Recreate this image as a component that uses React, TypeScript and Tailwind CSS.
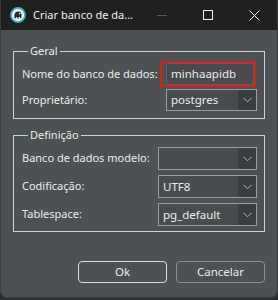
import React from "react";

const font = { fontFamily: '"Noto Sans", "Open Sans", sans-serif' };

function Chevron() {
  return (
    <svg width="9" height="6" viewBox="0 0 9 6" fill="none">
      <path d="M0.5 0.8 L4.5 4.8 L8.5 0.8" stroke="#b8bbbd" strokeWidth="1" />
    </svg>
  );
}

function Select({ value, width }: { value: string; width: string }) {
  return (
    <div className={`flex h-full ${width} border border-[#9a9d9f] bg-[#484c4e]`}>
      <div className="flex flex-1 items-center whitespace-nowrap pl-[4px] text-[11.5px] text-[#ececec]">{value}</div>
      <div className="flex w-[18px] items-center justify-center bg-[#3b3e40]">
        <Chevron />
      </div>
    </div>
  );
}

function Row({ label, children, h }: { label: string; children: React.ReactNode; h: string }) {
  return (
    <div className={`flex ${h} items-center justify-between`}>
      <span className="shrink-0 whitespace-nowrap text-[11px] text-[#ececec]">{label}</span>
      {children}
    </div>
  );
}

export default function App() {
  return (
    <div className="h-[300px] w-[278px] bg-[#2c2e2f]" style={font}>
      <div className="flex h-[298px] w-[278px] flex-col overflow-hidden rounded-b-[7px] border-x border-b border-[#3a3c3d] bg-[#4c5153]">
        <div className="flex h-[30px] shrink-0 items-center bg-[#202020]">
          <svg className="ml-[9px] shrink-0" width="16" height="16" viewBox="0 0 16 16">
            <circle cx="8" cy="8" r="7" fill="#f4f6f6" stroke="#3fb6c2" strokeWidth="1.8" />
            <path d="M4.5 11 C4 8 4.6 5 7.6 4.6 C10.2 4.3 11.9 5.8 11.6 8.2 L11.3 11.2 L10.1 11.2 L10 9.8 L8.7 9.9 L8.6 11.4 L7.3 11.4 L7.2 10.1 C6.3 10 5.8 10.6 5.8 11.6 Z" fill="#2a2a2a" />
            <circle cx="9.7" cy="6.6" r="0.8" fill="#f4f6f6" />
          </svg>
          <span className="ml-[7px] whitespace-nowrap text-[11px] text-[#f0f0f0]">Criar banco de da...</span>
          <div className="ml-auto flex shrink-0 items-center">
            <div className="flex w-[46px] justify-center">
              <div className="h-px w-[10px] bg-[#5a5a5a]" />
            </div>
            <div className="flex w-[46px] justify-center">
              <div className="h-[10px] w-[10px] border border-[#f0f0f0]" />
            </div>
            <div className="flex w-[46px] justify-center">
              <svg width="11" height="11" viewBox="0 0 11 11">
                <path d="M0.5 0.5 L10.5 10.5 M10.5 0.5 L0.5 10.5" stroke="#f0f0f0" strokeWidth="1" />
              </svg>
            </div>
          </div>
        </div>

        <div className="flex flex-col px-[12px]">
          <fieldset className="mt-[13px] border border-[#cfd1d2] px-[8px] pb-[7px]">
            <legend className="ml-[6px] px-[2px] text-[11px] leading-[16px] text-[#ececec]">Geral</legend>
            <div className="mt-[2px] flex flex-col gap-[2px]">
              <Row label="Nome do banco de dados:" h="h-[26px]">
                <div className="flex h-[26px] w-[96px] shrink-0 border-2 border-[#e01b1b] pl-[4px]">
                  <div className="flex flex-1 items-center border border-[#5c6062] bg-[#474b4d] pl-[4px] text-[11.5px] text-[#ececec]">
                    minhaapidb
                  </div>
                </div>
              </Row>
              <Row label="Proprietário:" h="h-[22px]">
                <div className="mr-[-1px] h-[22px] shrink-0">
                  <Select value="postgres" width="w-[91px]" />
                </div>
              </Row>
            </div>
          </fieldset>

          <fieldset className="mt-[8px] border border-[#cfd1d2] px-[8px] pb-[5px]">
            <legend className="ml-[6px] px-[2px] text-[11px] leading-[16px] text-[#ececec]">Definição</legend>
            <div className="mt-[4px] flex flex-col gap-[5px]">
              <Row label="Banco de dados modelo:" h="h-[23px]">
                <div className="mr-[-1px] h-[23px] shrink-0">
                  <Select value="" width="w-[99px]" />
                </div>
              </Row>
              <Row label="Codificação:" h="h-[23px]">
                <div className="mr-[-1px] h-[23px] shrink-0">
                  <Select value="UTF8" width="w-[99px]" />
                </div>
              </Row>
              <Row label="Tablespace:" h="h-[23px]">
                <div className="mr-[-1px] h-[23px] shrink-0">
                  <Select value="pg_default" width="w-[99px]" />
                </div>
              </Row>
            </div>
          </fieldset>

          <div className="mt-[29px] flex justify-end gap-[9px]">
            <button className="h-[22px] w-[89px] rounded-[4px] border border-[#dcdcdc] text-[11.5px] text-[#ececec]">Ok</button>
            <button className="h-[22px] w-[89px] rounded-[4px] border border-[#8c8f91] text-[11.5px] text-[#ececec]">Cancelar</button>
          </div>
        </div>
      </div>
    </div>
  );
}
